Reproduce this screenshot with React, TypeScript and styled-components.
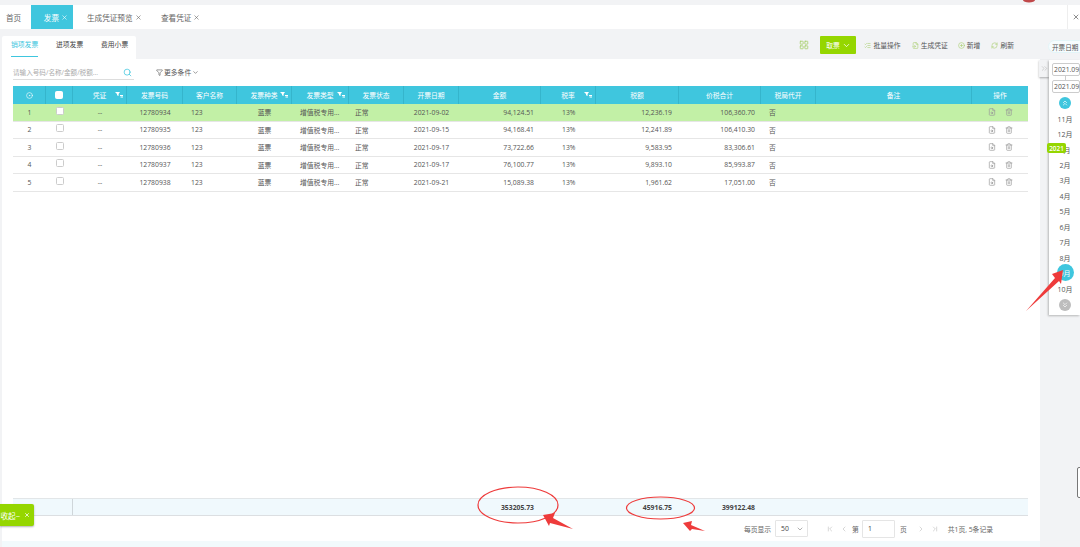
import React from "react";
import styled, { createGlobalStyle } from "styled-components";
import { ChevronDown, ChevronFirst, ChevronLast, ChevronLeft, ChevronRight, ChevronsDown, ChevronsRight, ChevronsUp, CircleDot, CirclePlus, FileInput, FileSearch, Filter, LayoutGrid, ListChecks, RefreshCw, Search, Trash2, X } from "lucide-react";

const Global = createGlobalStyle`
  html, body { margin: 0; padding: 0; background: #f2f3f5; overflow: hidden; }
  body { font-family: "Open Sans", "Noto Sans CJK SC", sans-serif; color: #555; }
  #root { width: 1080px; height: 547px; }
`;

const COLUMNS = "33px 27px 54px 56px 54px 55px 57px 55px 55px 82px 55px 83px 82px 55px 156px 56px";

const Page = styled.div`
  position: relative;
  width: 1080px;
  height: 547px;
  overflow: hidden;
  display: flex;
  flex-direction: column;
  padding-top: 5px;
  box-sizing: border-box;
  background: #f2f3f5;
`;
const TabBar = styled.div`
  height: 24px;
  flex: none;
  background: #fff;
  display: flex;
  align-items: stretch;
  font-size: 7.6px;
  color: #666;
  position: relative;
`;
const HomeTab = styled.div`
  width: 31px;
  padding-left: 6px;
  box-sizing: border-box;
  display: flex;
  align-items: center;
`;
const ActiveTab = styled.div`
  width: 42px;
  background: #3fc6de;
  color: #fff;
  display: flex;
  align-items: center;
  justify-content: flex-end;
  padding-right: 5px;
  box-sizing: border-box;
  gap: 2px;
  margin-right: 14px;
`;
const PlainTab = styled.div<{ $w: number }>`
  width: ${(p) => p.$w}px;
  display: flex;
  align-items: center;
  gap: 2px;
`;
const CloseBox = styled.div`
  margin-left: auto;
  width: 13px;
  border-left: 1px solid #eee;
  box-sizing: border-box;
  display: flex;
  align-items: center;
  justify-content: center;
  padding-left: 3px;
  color: #555;
`;
const Body = styled.div`
  flex: 1;
  display: flex;
  min-height: 0;
`;
const Left = styled.div`
  width: 1038px;
  margin-left: 2px;
  flex: none;
  display: flex;
  flex-direction: column;
  padding-top: 7px;
  box-sizing: border-box;
`;
const TopRow = styled.div`
  height: 23px;
  display: flex;
  align-items: flex-start;
  justify-content: space-between;
  flex: none;
`;
const SubTabs = styled.div`
  width: 134px;
  height: 23px;
  background: #fff;
  border-radius: 2px 2px 0 0;
  display: flex;
  padding-left: 9px;
  gap: 18px;
  box-sizing: border-box;
  font-size: 6.8px;
  color: #444;
`;
const SubTab = styled.div<{ $active?: boolean }>`
  height: 20px;
  line-height: 18px;
  width: 27px;
  white-space: nowrap;
  color: ${(p) => (p.$active ? "#3fc6de" : "#444")};
  border-bottom: 1px solid ${(p) => (p.$active ? "#3fc6de" : "transparent")};
`;
const Tools = styled.div`
  display: flex;
  align-items: center;
  height: 18px;
  font-size: 6.8px;
  color: #555;
  padding-right: 26px;
`;
const GreenButton = styled.div`
  width: 36px;
  height: 18px;
  background: #95d600;
  border-radius: 1px;
  color: #fff;
  display: flex;
  align-items: center;
  justify-content: center;
  gap: 2px;
  margin: 0 8px 0 11px;
`;
const Tool = styled.div<{ $gap: number }>`
  display: flex;
  align-items: center;
  gap: 2px;
  margin-right: ${(p) => p.$gap}px;
  svg { color: #a8cf6e; }
`;
const Card = styled.div`
  flex: 1;
  background: #fff;
  min-height: 0;
  display: flex;
  flex-direction: column;
  padding: 0 12px 0 11px;
`;
const SearchRow = styled.div`
  height: 27px;
  flex: none;
  display: flex;
  align-items: flex-start;
  padding-top: 6px;
  box-sizing: border-box;
`;
const SearchBox = styled.div`
  width: 119px;
  height: 14px;
  border-bottom: 1px solid #ddd;
  font-size: 6.6px;
  color: #aaa;
  display: flex;
  align-items: center;
  justify-content: space-between;
  padding-right: 2px;
  svg { color: #3fc6de; }
`;
const MoreFilter = styled.div`
  margin-left: 22px;
  height: 14px;
  font-size: 6.8px;
  color: #555;
  display: flex;
  align-items: center;
  gap: 1px;
`;
const HeaderRow = styled.div`
  display: grid;
  grid-template-columns: ${COLUMNS};
  height: 18px;
  flex: none;
  background: #3fc6de;
  color: #fff;
  font-size: 6.8px;
`;
const HeadCell = styled.div`
  display: flex;
  align-items: center;
  justify-content: center;
  border-right: 1px solid #35b5cc;
  position: relative;
  white-space: nowrap;
  &:last-child { border-right: 0; }
`;
const FilterMark = styled.span`
  position: absolute;
  right: 3px;
  top: 5px;
  display: flex;
`;
const Row = styled.div<{ $selected?: boolean }>`
  display: grid;
  grid-template-columns: ${COLUMNS};
  height: 17.5px;
  flex: none;
  box-sizing: border-box;
  background: ${(p) => (p.$selected ? "#c2f0a6" : "#fff")};
  border-bottom: 1px solid #e6e6e6;
  font-size: 6.8px;
  color: #555;
`;
const Cell = styled.div<{ $align?: string; $pad?: number }>`
  display: flex;
  align-items: center;
  justify-content: ${(p) => p.$align ?? "center"};
  padding: 0 ${(p) => (p.$align === "flex-end" ? p.$pad ?? 0 : 0)}px 0 ${(p) => (p.$align === "flex-start" ? p.$pad ?? 0 : 0)}px;
  white-space: nowrap;
  overflow: hidden;
`;
const Check = styled.span<{ $head?: boolean }>`
  width: 6px;
  height: 6px;
  border-radius: 1.5px;
  background: #fff;
  border: 1px solid ${(p) => (p.$head ? "#fff" : "#ccc")};
  margin-top: ${(p) => (p.$head ? 0 : -3)}px;
`;
const OpIcons = styled.div`
  display: flex;
  align-items: center;
  justify-content: center;
  gap: 9px;
  color: #999;
`;
const Spacer = styled.div`
  flex: 1;
`;
const SumRow = styled.div`
  display: grid;
  grid-template-columns: 60px 461px 138px 83px 1fr;
  height: 18px;
  flex: none;
  box-sizing: border-box;
  background: #f0f9fd;
  border-top: 1px solid #e2e6e8;
  border-bottom: 1px solid #dcdfe2;
  font-size: 6.8px;
  font-weight: 700;
  color: #444;
  align-items: center;
`;
const SumFirst = styled.div`
  height: 100%;
  border-right: 1px solid #cfd6da;
`;
const SumValue = styled.div`
  text-align: right;
`;
const Pager = styled.div`
  height: 25px;
  flex: none;
  display: flex;
  align-items: center;
  justify-content: flex-end;
  font-size: 6.8px;
  color: #666;
  padding-right: 35px;
`;
const PageSelect = styled.div`
  width: 33px;
  height: 17px;
  box-sizing: border-box;
  border: 1px solid #e5e5e5;
  border-radius: 1px;
  display: flex;
  align-items: center;
  justify-content: space-between;
  padding: 0 3px 0 5px;
  margin: 0 18px 0 4px;
  color: #444;
`;
const PageInput = styled.div`
  width: 33px;
  height: 18px;
  box-sizing: border-box;
  border: 1px solid #e5e5e5;
  border-radius: 1px;
  display: flex;
  align-items: center;
  padding-left: 5px;
  margin: 0 5px 0 3px;
  color: #444;
`;
const PagerGlyph = styled.span<{ $before?: number; $after: number }>`
  display: flex;
  color: #c4c4c4;
  margin-left: ${(p) => p.$before ?? 0}px;
  margin-right: ${(p) => p.$after}px;
`;
const BottomStrip = styled.div`
  height: 6px;
  flex: none;
  margin: 0 -12px 0 -11px;
  background: #f2fafc;
`;
const Side = styled.div`
  flex: 1;
  position: relative;
`;
const DatePill = styled.div`
  position: absolute;
  left: 8px;
  top: 11px;
  width: 38px;
  height: 13px;
  border-radius: 6.5px;
  background: #f6fcfe;
  border: 1px solid #e3f5f8;
  box-sizing: border-box;
  font-size: 6.6px;
  color: #555;
  display: flex;
  align-items: center;
  padding-left: 3px;
  white-space: nowrap;
`;
const CollapseTab = styled.div`
  position: absolute;
  left: -1px;
  top: 31px;
  width: 10px;
  height: 17px;
  background: #f2f3f5;
  box-shadow: 0 1px 2px rgba(0,0,0,.3);
  display: flex;
  align-items: center;
  justify-content: center;
  color: #c4c4c4;
`;
const Dates = styled.div`
  position: absolute;
  left: 9px;
  top: 31px;
  width: 31px;
  height: 255px;
  background: #fff;
  box-shadow: -1px 1px 2px rgba(0,0,0,.25);
  display: flex;
  flex-direction: column;
  align-items: flex-start;
  padding: 3px 0 0 3px;
  box-sizing: border-box;
`;
const DateBox = styled.div`
  width: 28px;
  height: 12.5px;
  box-sizing: border-box;
  border: 1px solid #ccc;
  border-radius: 2px;
  font-size: 6.8px;
  color: #555;
  display: flex;
  align-items: center;
  padding-left: 1px;
  margin-bottom: 4.5px;
  white-space: nowrap;
  position: relative;
  &:first-child::after {
    content: "";
    position: absolute;
    left: 12px;
    top: 11.5px;
    width: 1px;
    height: 4.5px;
    background: #ccc;
  }
`;
const Months = styled.div`
  width: 26px;
  display: flex;
  flex-direction: column;
  align-items: center;
`;
const RoundIcon = styled.div<{ $grey?: boolean }>`
  width: 12px;
  height: 12px;
  border-radius: 50%;
  background: ${(p) => (p.$grey ? "#bdbdbd" : "#3fc6de")};
  color: #fff;
  display: flex;
  align-items: center;
  justify-content: center;
  flex: none;
  margin: ${(p) => (p.$grey ? "2.6px 0 0" : "0 0 2px")};
`;
const Month = styled.div<{ $active?: boolean }>`
  height: 15.45px;
  flex: none;
  font-size: 7px;
  color: #555;
  display: flex;
  align-items: center;
  justify-content: center;
  position: relative;
  width: 26px;
  ${(p) => p.$active && `
    color: #fff;
    z-index: 1;
    &::before { content: ""; position: absolute; left: 5px; top: -1px; width: 17px; height: 17px; border-radius: 50%; background: #3fc6de; z-index: -1; }
  `}
`;
const YearBadge = styled.div`
  position: absolute;
  left: 7px;
  top: 114px;
  width: 19px;
  height: 10px;
  border-radius: 2px;
  background: #95d600;
  color: #fff;
  font-size: 6.4px;
  font-weight: 600;
  display: flex;
  align-items: center;
  justify-content: center;
`;
const Toast = styled.div`
  position: absolute;
  left: 0;
  top: 504px;
  width: 34px;
  height: 22px;
  background: #95d600;
  border-radius: 0 2px 2px 0;
  box-shadow: 0 1px 2px rgba(0,0,0,.3);
  color: #fff;
  font-size: 7.6px;
  display: flex;
  align-items: center;
  justify-content: flex-end;
  gap: 4px;
  padding-right: 4px;
  box-sizing: border-box;
  overflow: hidden;
  white-space: nowrap;
`;
const EdgeMark = styled.div`
  position: absolute;
  right: -2px;
  top: 438px;
  width: 3px;
  height: 29px;
  border: 1px solid #777;
  border-radius: 2px;
  background: #fff;
`;
const Overlay = styled.svg`
  position: absolute;
  left: 0;
  top: 0;
  width: 1080px;
  height: 547px;
  pointer-events: none;
  z-index: 5;
`;

const HEADERS: [string, boolean][] = [
  ["", false], ["", false], ["凭证", true], ["发票号码", false], ["客户名称", false], ["发票种类", true], ["发票类型", true], ["发票状态", false],
  ["开票日期", false], ["金额", false], ["税率", true], ["税额", false], ["价税合计", false], ["税局代开", false], ["备注", false], ["操作", false],
];
const ROWS = [
  ["1", "12780934", "2021-09-02", "94,124.51", "12,236.19", "106,360.70"],
  ["2", "12780935", "2021-09-15", "94,168.41", "12,241.89", "106,410.30"],
  ["3", "12780936", "2021-09-17", "73,722.66", "9,583.95", "83,306.61"],
  ["4", "12780937", "2021-09-17", "76,100.77", "9,893.10", "85,993.87"],
  ["5", "12780938", "2021-09-21", "15,089.38", "1,961.62", "17,051.00"],
];
const MONTHS = ["11月", "12月", "1月", "2月", "3月", "4月", "5月", "6月", "7月", "8月", "9月", "10月"];

const FilterGlyph = () => (
  <svg width="8" height="8" viewBox="0 0 8 8" fill="#fff">
    <path d="M0 1h5L3.6 3v2L2 4.2V3z" />
    <path d="M5 4h3v1H5zM5.5 5.6H8v1H5.5z" />
  </svg>
);

export default function App() {
  return (
    <Page>
      <Global />
      <TabBar>
        <HomeTab>首页</HomeTab>
        <ActiveTab>发票<X size={7} /></ActiveTab>
        <PlainTab $w={74}>生成凭证预览<X size={7} /></PlainTab>
        <PlainTab $w={60}>查看凭证<X size={7} /></PlainTab>
        <CloseBox><X size={8} /></CloseBox>
      </TabBar>
      <Body>
        <Left>
          <TopRow>
            <SubTabs>
              <SubTab $active>销项发票</SubTab>
              <SubTab>进项发票</SubTab>
              <SubTab>费用小票</SubTab>
            </SubTabs>
            <Tools>
              <LayoutGrid size={10} color="#a8cf6e" />
              <GreenButton>取票<ChevronDown size={9} /></GreenButton>
              <Tool $gap={11}><ListChecks size={7} />批量操作</Tool>
              <Tool $gap={10}><FileInput size={7} />生成凭证</Tool>
              <Tool $gap={11}><CirclePlus size={7} />新增</Tool>
              <Tool $gap={0}><RefreshCw size={7} />刷新</Tool>
            </Tools>
          </TopRow>
          <Card>
            <SearchRow>
              <SearchBox>请输入号码/名称/金额/税额...<Search size={9} /></SearchBox>
              <MoreFilter><Filter size={7} />更多条件<ChevronDown size={7} /></MoreFilter>
            </SearchRow>
            <HeaderRow>
              {HEADERS.map(([label, filter], i) => (
                <HeadCell key={i}>
                  {i === 0 && <CircleDot size={7} />}
                  {i === 1 && <Check $head />}
                  {label}
                  {filter && <FilterMark><FilterGlyph /></FilterMark>}
                </HeadCell>
              ))}
            </HeaderRow>
            {ROWS.map((r, i) => (
              <Row key={r[0]} $selected={i === 0}>
                <Cell>{r[0]}</Cell>
                <Cell><Check /></Cell>
                <Cell>--</Cell>
                <Cell>{r[1]}</Cell>
                <Cell $align="flex-start" $pad={8}>123</Cell>
                <Cell>蓝票</Cell>
                <Cell $align="flex-start" $pad={8}>增值税专用...</Cell>
                <Cell $align="flex-start" $pad={6}>正常</Cell>
                <Cell>{r[2]}</Cell>
                <Cell $align="flex-end" $pad={7}>{r[3]}</Cell>
                <Cell $align="flex-start" $pad={21}>13%</Cell>
                <Cell $align="flex-end" $pad={7}>{r[4]}</Cell>
                <Cell $align="flex-end" $pad={6}>{r[5]}</Cell>
                <Cell $align="flex-start" $pad={8}>否</Cell>
                <Cell />
                <OpIcons><FileSearch size={8} /><Trash2 size={8} /></OpIcons>
              </Row>
            ))}
            <Spacer />
            <SumRow>
              <SumFirst />
              <SumValue>353205.73</SumValue>
              <SumValue>45916.75</SumValue>
              <SumValue>399122.48</SumValue>
              <span />
            </SumRow>
            <Pager>
              每页显示
              <PageSelect>50<ChevronDown size={8} color="#888" /></PageSelect>
              <PagerGlyph $after={6}><ChevronFirst size={8} /></PagerGlyph>
              <PagerGlyph $after={4}><ChevronLeft size={8} /></PagerGlyph>
              第
              <PageInput>1</PageInput>
              页
              <PagerGlyph $before={10} $after={6}><ChevronRight size={8} /></PagerGlyph>
              <PagerGlyph $after={9}><ChevronLast size={8} /></PagerGlyph>
              共1页, 5条记录
            </Pager>
            <BottomStrip />
          </Card>
        </Left>
        <Side>
          <DatePill>开票日期</DatePill>
          <CollapseTab><ChevronsRight size={9} /></CollapseTab>
          <Dates>
            <DateBox>2021.09</DateBox>
            <DateBox>2021.09</DateBox>
            <Months>
              <RoundIcon><ChevronsUp size={8} /></RoundIcon>
              {MONTHS.map((m) => <Month key={m} $active={m === "9月"}>{m}</Month>)}
              <RoundIcon $grey><ChevronsDown size={8} /></RoundIcon>
            </Months>
          </Dates>
          <YearBadge>2021</YearBadge>
          <EdgeMark />
        </Side>
      </Body>
      <Toast>收起~<X size={6} strokeWidth={3} /></Toast>
      <Overlay viewBox="0 0 1080 547" fill="none">
        <ellipse cx="518" cy="505" rx="40" ry="18" stroke="#ee3b3b" strokeWidth="1.2" />
        <ellipse cx="660.5" cy="508" rx="34" ry="11" stroke="#ee3b3b" strokeWidth="1.2" />
        <path d="M543 515L555 513L553 518L573 529L550 523L549 526Z" fill="#ee3b3b" />
        <path d="M683 523L692 521L691 525L705 531L692 529L690 531Z" fill="#ee3b3b" />
        <path d="M1063 270L1052 274L1055 278L1026 311L1059 281L1061 284Z" fill="#ee3b3b" />
        <path d="M1023 0a6 2.5 0 0 0 12 0z" fill="#c0484a" />
      </Overlay>
    </Page>
  );
}
